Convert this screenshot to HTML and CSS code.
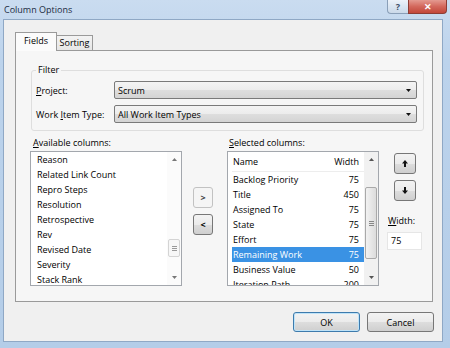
FILE: index.html
```html
<!DOCTYPE html>
<html lang="en">
<head>
    <meta charset="UTF-8">
    <title>Column Options</title>
    <link rel="stylesheet" href="styles.css">
</head>
<body>

<div class="window">
    <div class="titlebar">
        <span class="title">Column Options</span>
        <div class="caption">
            <span class="cap-help">?</span>
            <span class="cap-close">&#x2715;</span>
        </div>
    </div>

    <div class="client">
        <div class="tabs">
            <span class="tab active">Fields</span>
            <span class="tab">Sorting</span>
        </div>

        <div class="panel">
            <fieldset class="filter">
                <legend>Filter</legend>
                <div class="filter-row">
                    <label><u>P</u>roject:</label>
                    <div class="combo"><span>Scrum</span><svg width="5" height="3" viewBox="0 0 5 3"><path d="M0 0H5L2.5 3Z" fill="#111"/></svg></div>
                </div>
                <div class="filter-row">
                    <label>Work <u>I</u>tem Type:</label>
                    <div class="combo"><span>All Work Item Types</span><svg width="5" height="3" viewBox="0 0 5 3"><path d="M0 0H5L2.5 3Z" fill="#111"/></svg></div>
                </div>
            </fieldset>

            <div class="columns">
                <!-- available columns -->
                <div class="col-list">
                    <div class="list-label avail"><u>A</u>vailable columns:</div>
                    <div class="listbox">
                        <div class="items">
                            <div class="item">Reason</div>
                            <div class="item">Related Link Count</div>
                            <div class="item">Repro Steps</div>
                            <div class="item">Resolution</div>
                            <div class="item">Retrospective</div>
                            <div class="item">Rev</div>
                            <div class="item">Revised Date</div>
                            <div class="item">Severity</div>
                            <div class="item">Stack Rank</div>
                        </div>
                        <div class="scrollbar faint">
                            <div class="sb-arrow"><svg width="5" height="3" viewBox="0 0 5 3"><path d="M0 3H5L2.5 0Z" fill="#777"/></svg></div>
                            <div class="sb-track">
                                <div class="sb-thumb small"><svg width="5" height="5" viewBox="0 0 5 5"><path d="M0 0.5H5M0 2.5H5M0 4.5H5" stroke="#999" stroke-width="1"/></svg></div>
                            </div>
                            <div class="sb-arrow"><svg width="5" height="3" viewBox="0 0 5 3"><path d="M0 0H5L2.5 3Z" fill="#777"/></svg></div>
                        </div>
                    </div>
                </div>

                <div class="move-btns">
                    <button class="btn small disabled">&gt;</button>
                    <button class="btn small">&lt;</button>
                </div>

                <!-- selected columns -->
                <div class="col-list selected-col">
                    <div class="list-label sel"><u>S</u>elected columns:</div>
                    <div class="listbox">
                        <div class="grid-area">
                            <div class="row head"><span>Name</span><span>Width</span></div>
                            <div class="row"><span>Backlog Priority</span><span>75</span></div>
                            <div class="row"><span>Title</span><span>450</span></div>
                            <div class="row"><span>Assigned To</span><span>75</span></div>
                            <div class="row"><span>State</span><span>75</span></div>
                            <div class="row"><span>Effort</span><span>75</span></div>
                            <div class="row selected"><span>Remaining Work</span><span>75</span></div>
                            <div class="row"><span>Business Value</span><span>50</span></div>
                            <div class="row"><span>Iteration Path</span><span>200</span></div>
                        </div>
                        <div class="scrollbar">
                            <div class="sb-arrow"><svg width="5" height="3" viewBox="0 0 5 3"><path d="M0 3H5L2.5 0Z" fill="#555"/></svg></div>
                            <div class="sb-track">
                                <div class="sb-thumb big"><svg width="5" height="5" viewBox="0 0 5 5"><path d="M0 0.5H5M0 2.5H5M0 4.5H5" stroke="#888" stroke-width="1"/></svg></div>
                            </div>
                            <div class="sb-arrow"><svg width="5" height="3" viewBox="0 0 5 3"><path d="M0 0H5L2.5 3Z" fill="#555"/></svg></div>
                        </div>
                    </div>
                </div>

                <div class="side">
                    <button class="btn order"><svg width="6" height="7" viewBox="0 0 6 7"><path d="M3 0L6 3.5H4V7H2V3.5H0Z" fill="#111"/></svg></button>
                    <button class="btn order"><svg width="6" height="7" viewBox="0 0 6 7"><path d="M3 7L6 3.5H4V0H2V3.5H0Z" fill="#111"/></svg></button>
                    <div class="width-label"><u>W</u>idth:</div>
                    <div class="width-input">75</div>
                </div>
            </div>
        </div>

        <div class="footer">
            <button class="btn dlg default">OK</button>
            <button class="btn dlg">Cancel</button>
        </div>
    </div>
</div>

</body>
</html>
```

FILE: styles.css
```css
/* Window frame */
body {
    margin: 0;
    font-family: "Open Sans", "Noto Sans", sans-serif;
    font-size: 9px;
    color: #000;
    background-color: #b6cfea;
}

.window {
    width: 450px;
    height: 348px;
    display: flex;
    flex-direction: column;
    overflow: hidden;
    background: linear-gradient(#cadcf0, #bcd3ec 60px, #b4cde8);
}

.titlebar {
    height: 19px;
    display: flex;
    align-items: flex-start;
    flex-shrink: 0;
}

.title {
    padding: 3px 0 0 4px;
    line-height: 13px;
    color: #1b2b3f;
}

.caption {
    margin-left: auto;
    margin-right: 3px;
    display: flex;
}

.cap-help,
.cap-close {
    height: 14px;
    box-sizing: border-box;
    display: flex;
    align-items: center;
    justify-content: center;
    line-height: 1;
}

.cap-help {
    width: 21px;
    border: 1px solid #8a9fb8;
    border-top: none;
    border-right: none;
    border-radius: 0 0 0 4px;
    background: linear-gradient(#edf2f9, #dae5f1 50%, #cbd9e9);
    color: #3b4e66;
    font-size: 9px;
    font-weight: bold;
}

.cap-close {
    width: 39px;
    border: 1px solid #8d3d35;
    border-top: none;
    border-radius: 0 0 4px 0;
    background: linear-gradient(#e49a90, #d3685c 50%, #c2473a);
    color: #fff;
    font-size: 9px;
    font-weight: bold;
}

/* Client area */
.client {
    margin-left: 3px;
    width: 440px;
    height: 323px;
    box-sizing: border-box;
    border: 1px solid #8fa8c5;
    background-color: #f0f0f0;
    flex-shrink: 0;
}

.tabs {
    display: flex;
    align-items: flex-end;
    margin-top: 12px;
    padding-left: 11px;
    height: 18px;
}

.tab {
    box-sizing: border-box;
    height: 15px;
    width: 37px;
    margin-left: -1px;
    border: 1px solid #9a9a9a;
    border-bottom: none;
    background: linear-gradient(#f3f3f3, #e6e6e6);
    text-align: center;
    line-height: 13px;
}

.tab.active {
    width: 42px;
    height: 19px;
    margin-left: 0;
    margin-bottom: -1px;
    position: relative;
    z-index: 1;
    background: #fbfbfb;
    line-height: 16px;
}

.panel {
    margin-left: 11px;
    width: 418px;
    height: 252px;
    box-sizing: border-box;
    border: 1px solid #9a9a9a;
    background-color: #f6f6f6;
}

/* Filter group */
.filter {
    margin: 13px 0 0 15px;
    width: 393px;
    box-sizing: border-box;
    padding: 5px 6px 7px 4px;
    border: 1px solid #dedede;
    border-radius: 3px;
    min-inline-size: 0;
}

.filter legend {
    padding: 0 2px;
    margin-left: 0;
    line-height: 12px;
}

.filter-row {
    display: flex;
    align-items: center;
}

.filter-row + .filter-row {
    margin-top: 6px;
}

.filter-row label {
    width: 78px;
    flex-shrink: 0;
}

.combo {
    flex: 1;
    height: 18px;
    box-sizing: border-box;
    border: 1px solid #7a7a7a;
    border-radius: 2px;
    background: linear-gradient(#f4f4f4, #ececec 50%, #dedede 51%, #d4d4d4);
    display: flex;
    align-items: center;
    justify-content: space-between;
    padding: 0 5px 0 3px;
}

/* Column lists */
.columns {
    display: flex;
    margin: 6px 0 0 14px;
}

.col-list {
    width: 152px;
    flex-shrink: 0;
}

.col-list.selected-col {
    margin-left: 14px;
}

.list-label {
    line-height: 12px;
    height: 14px;
}

.list-label.avail {
    padding-left: 3px;
}

.list-label.sel {
    padding-left: 2px;
}

.listbox {
    height: 135px;
    box-sizing: border-box;
    border: 1px solid #a3a7ad;
    background-color: #fff;
    display: flex;
    overflow: hidden;
}

.items {
    flex: 1;
    padding-left: 6px;
}

.item {
    line-height: 15px;
    white-space: nowrap;
}

.grid-area {
    flex: 1;
    margin-left: 4px;
}

.row {
    display: flex;
    justify-content: space-between;
    padding: 0 5px 0 1px;
    line-height: 15px;
    white-space: nowrap;
}

.row.head {
    line-height: 19px;
    border-bottom: 1px solid #ededed;
    height: 19px;
}

.row.selected {
    background-color: #3a92e4;
    color: #fff;
}

/* Scroll bars */
.scrollbar {
    width: 14px;
    flex-shrink: 0;
    display: flex;
    flex-direction: column;
    background-color: #f1f1f1;
}

.scrollbar.faint {
    background-color: #fbfbfb;
}

.sb-arrow {
    height: 15px;
    display: flex;
    align-items: center;
    justify-content: center;
}

.sb-track {
    flex: 1;
}

.sb-thumb {
    margin: 0 1px;
    box-sizing: border-box;
    border: 1px solid #a9a9a9;
    border-radius: 2px;
    background: linear-gradient(to right, #f2f2f2, #dcdcdc);
    display: flex;
    align-items: center;
    justify-content: center;
}

.sb-thumb.big {
    margin-top: 20px;
    height: 72px;
}

.sb-thumb.small {
    margin-top: 72px;
    height: 18px;
    border-color: #d4d4d4;
    background: #f7f7f7;
}

/* Buttons */
.btn {
    font-family: inherit;
    font-size: 9px;
    color: #000;
    padding: 0;
    box-sizing: border-box;
    border: 1px solid #777;
    border-radius: 3px;
    background: linear-gradient(#f3f3f3, #ebebeb 50%, #dddddd 51%, #cfcfcf);
    display: flex;
    align-items: center;
    justify-content: center;
}

.btn.small {
    width: 20px;
    height: 21px;
    font-weight: bold;
}

.btn.small.disabled {
    border-color: #c2c2c2;
    background: #f5f5f5;
    color: #444;
}

.move-btns {
    margin-left: 11px;
    padding-top: 50px;
    display: flex;
    flex-direction: column;
    gap: 6px;
}

.side {
    margin-left: 8px;
    width: 35px;
    padding-top: 16px;
    display: flex;
    flex-direction: column;
}

.btn.order {
    width: 22px;
    height: 21px;
    margin-left: 7px;
}

.btn.order + .btn.order {
    margin-top: 6px;
}

.width-label {
    margin-top: 14px;
    padding-left: 1px;
    line-height: 12px;
}

.width-input {
    margin-top: 5px;
    height: 18px;
    box-sizing: border-box;
    border: 1px solid #e6e6e6;
    background-color: #fff;
    padding-left: 3px;
    line-height: 16px;
}

/* Dialog buttons */
.footer {
    display: flex;
    justify-content: flex-end;
    gap: 7px;
    margin: 10px 8px 0 0;
}

.btn.dlg {
    width: 67px;
    height: 20px;
}

.btn.default {
    border-color: #3d7bad;
    box-shadow: inset 0 0 0 1px #bfe3f8;
}
```
